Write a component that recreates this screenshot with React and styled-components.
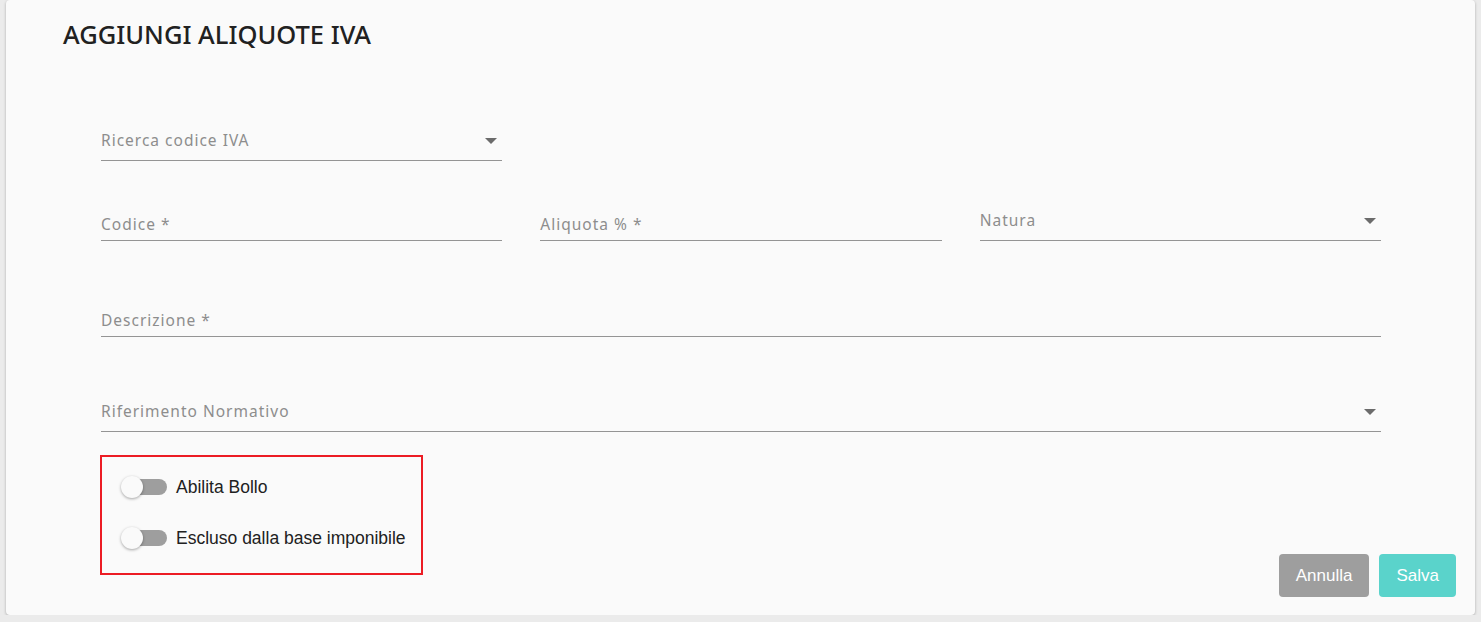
// Packages:
import React from 'react';
import styled, { createGlobalStyle } from 'styled-components';


// Constants:
const COLORS = {
  PAGE: '#ebebeb',
  CARD: '#fafafa',
  INK: '#212121',
  LABEL: '#8d8d8d',
  LINE: '#949494',
  ARROW: '#6b6b6b',
  RED: '#ec1c24',
  TRACK: '#9e9e9e',
  GREY_BUTTON: '#9e9e9e',
  TEAL_BUTTON: '#5ad3cb',
};


// Styles:
const GlobalStyle = createGlobalStyle`
  html, body {
    margin: 0;
    padding: 0;
    background: ${ COLORS.PAGE };
  }
  * {
    box-sizing: border-box;
  }
`;

const Card = styled.div`
  display: flex;
  flex-direction: column;
  width: 1469px;
  height: 615px;
  margin: 0 0 0 6px;
  padding: 19px 19px 19px 57px;
  background: ${ COLORS.CARD };
  border-radius: 4px;
  box-shadow: 0 1px 3px rgba(0, 0, 0, 0.28);
`;

const Title = styled.h1`
  margin: 0;
  font-family: "Noto Sans", Lato, sans-serif;
  font-weight: 500;
  font-size: 25.5px;
  line-height: 30px;
  color: ${ COLORS.INK };
`;

const Form = styled.div`
  display: flex;
  flex-direction: column;
  padding: 0 75px 0 38px;
`;

const Row = styled.div`
  display: grid;
  grid-template-columns: repeat(3, 1fr);
  column-gap: 38px;
  margin-top: ${ props => props.$top }px;
`;

const Field = styled.div`
  grid-column: ${ props => props.$wide ? '1 / -1' : 'auto' };
  display: flex;
  align-items: flex-end;
  justify-content: space-between;
  height: 40px;
  padding-bottom: ${ props => props.$select ? 11 : 7 }px;
  border-bottom: 1px solid ${ COLORS.LINE };
`;

const Label = styled.span`
  font-family: "Noto Sans", Lato, sans-serif;
  font-size: 15.5px;
  line-height: 18px;
  letter-spacing: 1px;
  color: ${ COLORS.LABEL };
`;

const Arrow = styled.span`
  width: 0;
  height: 0;
  margin: 0 5px 5px 0;
  border-left: 6px solid transparent;
  border-right: 6px solid transparent;
  border-top: 6px solid ${ COLORS.ARROW };
`;

const Footer = styled.div`
  display: flex;
  align-items: flex-end;
  justify-content: space-between;
  margin-top: 23px;
`;

const ToggleBox = styled.div`
  display: flex;
  flex-direction: column;
  gap: 27px;
  margin: 0 0 22px 37px;
  padding: 18px 15px 23px 20px;
  border: 2px solid ${ COLORS.RED };
`;

const ToggleRow = styled.label`
  display: flex;
  align-items: center;
  gap: 9px;
  font-family: "Liberation Sans", Arial, sans-serif;
  font-size: 17.5px;
  line-height: 24px;
  color: ${ COLORS.INK };
`;

const Track = styled.span`
  position: relative;
  display: inline-block;
  width: 44px;
  height: 16px;
  margin-left: 1px;
  border-radius: 8px;
  background: ${ COLORS.TRACK };
`;

const Thumb = styled.span`
  position: absolute;
  left: -2px;
  top: -3px;
  width: 22px;
  height: 22px;
  border-radius: 50%;
  background: #fafafa;
  box-shadow: 0 1px 3px rgba(0, 0, 0, 0.35);
`;

const Buttons = styled.div`
  display: flex;
  gap: 10px;
`;

const Button = styled.button`
  height: 43px;
  padding: 0 17px;
  border: none;
  border-radius: 4px;
  background: ${ props => props.$primary ? COLORS.TEAL_BUTTON : COLORS.GREY_BUTTON };
  color: #ffffff;
  font-family: "Liberation Sans", Arial, sans-serif;
  font-size: 17px;
  cursor: pointer;
`;


// Functions:
const Toggle = ({ label }) => (
  <ToggleRow>
    <Track><Thumb /></Track>
    { label }
  </ToggleRow>
);

const App = () => {
  // Return:
  return (
    <>
      <GlobalStyle />
      <Card>
        <Title>AGGIUNGI ALIQUOTE IVA</Title>
        <Form>
          <Row $top={ 72 }>
            <Field $select>
              <Label>Ricerca codice IVA</Label>
              <Arrow />
            </Field>
          </Row>
          <Row $top={ 40 }>
            <Field><Label>Codice *</Label></Field>
            <Field><Label>Aliquota % *</Label></Field>
            <Field $select>
              <Label>Natura</Label>
              <Arrow />
            </Field>
          </Row>
          <Row $top={ 56 }>
            <Field $wide><Label>Descrizione *</Label></Field>
          </Row>
          <Row $top={ 55 }>
            <Field $wide $select>
              <Label>Riferimento Normativo</Label>
              <Arrow />
            </Field>
          </Row>
        </Form>
        <Footer>
          <ToggleBox>
            <Toggle label="Abilita Bollo" />
            <Toggle label="Escluso dalla base imponibile" />
          </ToggleBox>
          <Buttons>
            <Button>Annulla</Button>
            <Button $primary>Salva</Button>
          </Buttons>
        </Footer>
      </Card>
    </>
  );
};


// Exports:
export default App;
